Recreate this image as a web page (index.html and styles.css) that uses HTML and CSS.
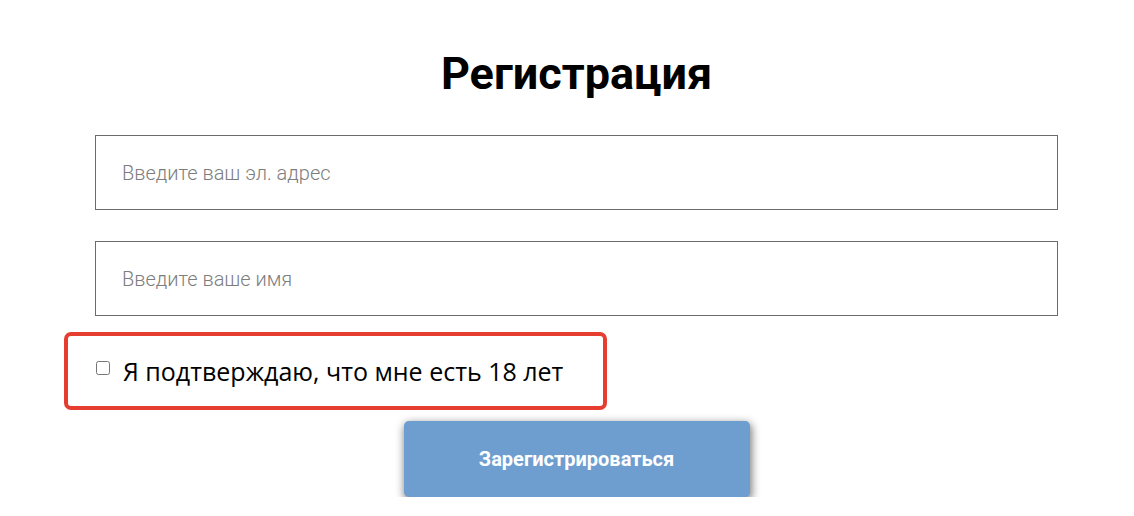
FILE: index.html
```html
<!DOCTYPE html>
<html lang="ru">
<head>
  <meta charset="UTF-8">
  <meta name="viewport" content="width=device-width, initial-scale=1.0">
  <title>Регистрация</title>
  <link rel="stylesheet" href="styles.css">
</head>

<body>
  <form class="form">
    <h1 class="title">Регистрация</h1>
    <input type="email" class="field" placeholder="Введите ваш эл. адрес">
    <input type="text" class="field" placeholder="Введите ваше имя">
    <label class="agree">
      <input type="checkbox" id="age">
      <span>Я подтверждаю, что мне есть 18 лет</span>
    </label>
    <button type="submit" class="btn">Зарегистрироваться</button>
  </form>
</body>
</html>
```

FILE: styles.css
```css
body {
  margin: 0;
  background-color: #fff;
  font-family: Roboto, Arial, sans-serif;
}

.form {
  width: 963px;
  margin-left: 95px;
  display: flex;
  flex-direction: column;
}

.title {
  margin: 48px 0 35px;
  font-size: 45px;
  font-weight: 700;
  line-height: 52px;
  text-align: center;
  color: #000;
}

.field {
  box-sizing: border-box;
  height: 75px;
  margin-bottom: 31px;
  padding: 0 26px;
  border: 1px solid #6b6b6b;
  font-family: Roboto, Arial, sans-serif;
  font-size: 20px;
  font-weight: 300;
  color: #333;
  outline: none;
}

.field:last-of-type {
  margin-bottom: 0;
}

.field::placeholder {
  color: #7d7d7d;
}

.agree {
  box-sizing: border-box;
  align-self: flex-start;
  display: flex;
  align-items: center;
  width: 543px;
  height: 78px;
  margin: 16px 0 0 -31px;
  padding-left: 28px;
  border: 4px solid #e53e30;
  border-radius: 7px;
  font-family: "Open Sans", Arial, sans-serif;
  font-size: 25px;
  color: #000;
}

.agree input {
  width: 14px;
  height: 14px;
  margin: 0 13px 6px 0;
}

.btn {
  align-self: center;
  width: 346px;
  height: 76px;
  margin-top: 11px;
  border: none;
  border-radius: 5px;
  background-color: #6d9ecf;
  box-shadow: 1px 3px 8px 1px rgba(0, 0, 0, 0.5);
  font-family: Roboto, Arial, sans-serif;
  font-size: 20px;
  font-weight: 700;
  color: #fff;
  cursor: pointer;
}
```
